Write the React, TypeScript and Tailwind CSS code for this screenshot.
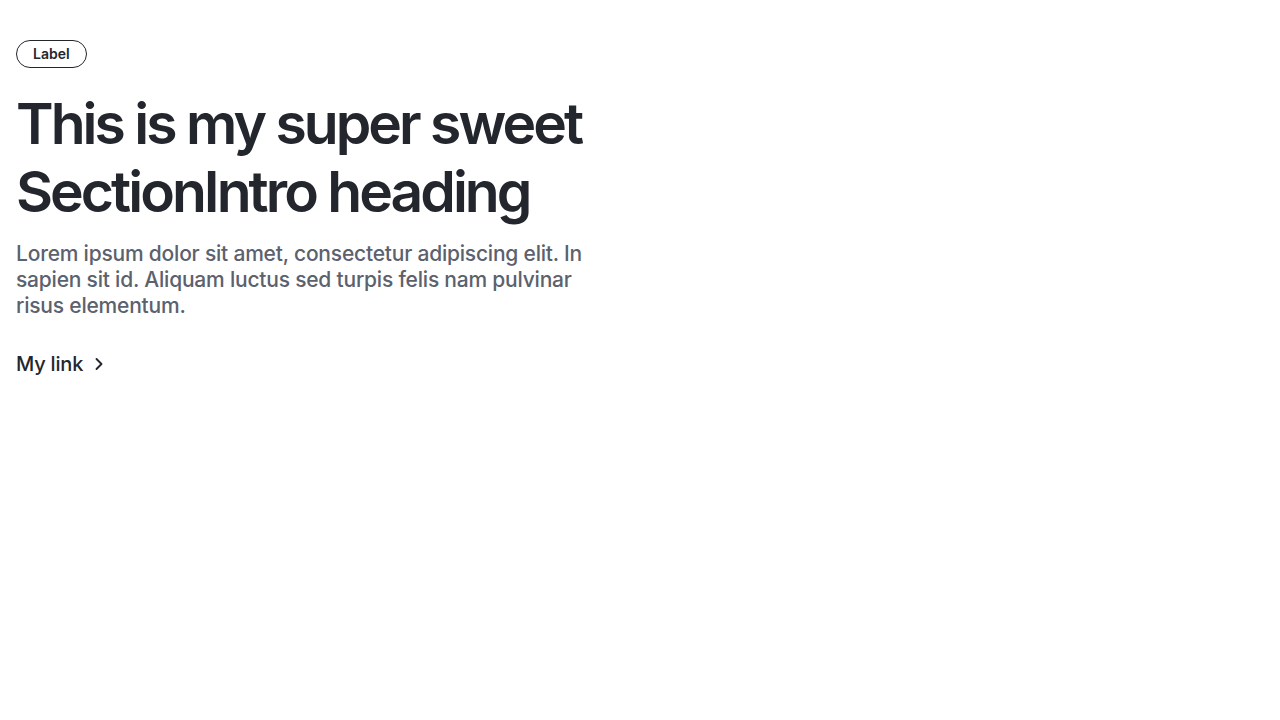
import { ChevronRight } from "lucide-react";

export default function App() {
  return (
    <div
      className="min-h-screen bg-white px-4 pt-10 text-[#23262d]"
      style={{ fontFamily: "Inter, 'Noto Sans', sans-serif" }}
    >
      <section className="flex max-w-[572px] flex-col items-start">
        <span className="rounded-full border border-[#23262d] px-4 py-[3px] text-sm font-semibold leading-5">
          Label
        </span>
        <h2 className="mt-[22px] text-[57px] font-semibold leading-[68px] tracking-[-0.052em]">
          This is my super sweet SectionIntro heading
        </h2>
        <p className="mt-[15px] text-[21px] font-medium leading-[26px] tracking-[-0.01em] text-[#5b616d]">
          Lorem ipsum dolor sit amet, consectetur adipiscing elit. In sapien sit id. Aliquam luctus sed turpis felis nam pulvinar risus elementum.
        </p>
        <a href="#" className="mt-[31px] flex items-center gap-1.5 text-xl font-medium leading-7 tracking-[-0.01em]">
          My link
          <ChevronRight size={20} strokeWidth={2.25} />
        </a>
      </section>
    </div>
  );
}
